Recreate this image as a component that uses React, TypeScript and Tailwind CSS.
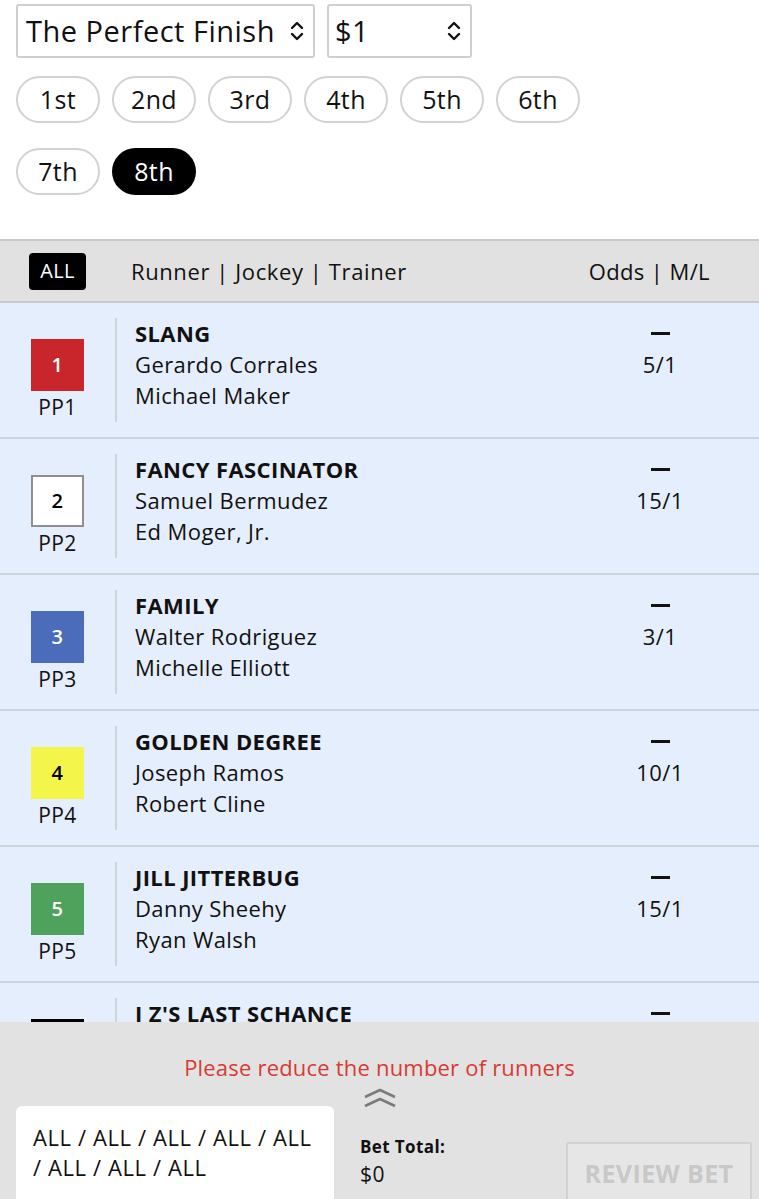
import React from 'react';

const MAIN = "font-['Open_Sans','Lato',sans-serif]";

type Runner = {
  pp: number;
  name: string;
  jockey: string;
  trainer: string;
  odds: string;
  box: string;
};

const runners: Runner[] = [
  { pp: 1, name: 'SLANG', jockey: 'Gerardo Corrales', trainer: 'Michael Maker', odds: '5/1', box: 'bg-[#c8262b] text-white' },
  { pp: 2, name: 'FANCY FASCINATOR', jockey: 'Samuel Bermudez', trainer: 'Ed Moger, Jr.', odds: '15/1', box: 'bg-white text-black border-2 border-[#8f8f8f]' },
  { pp: 3, name: 'FAMILY', jockey: 'Walter Rodriguez', trainer: 'Michelle Elliott', odds: '3/1', box: 'bg-[#4a6cba] text-white' },
  { pp: 4, name: 'GOLDEN DEGREE', jockey: 'Joseph Ramos', trainer: 'Robert Cline', odds: '10/1', box: 'bg-[#f4f54b] text-black' },
  { pp: 5, name: 'JILL JITTERBUG', jockey: 'Danny Sheehy', trainer: 'Ryan Walsh', odds: '15/1', box: 'bg-[#4fa25c] text-white' },
  { pp: 6, name: "J Z'S LAST SCHANCE", jockey: '', trainer: '', odds: '', box: 'bg-black text-white' },
];

const races = ['1st', '2nd', '3rd', '4th', '5th', '6th', '7th', '8th'];

const UpDown = () => (
  <svg width="14" height="22" viewBox="0 0 14 22" fill="none" stroke="#111" strokeWidth="2.4" strokeLinecap="round" strokeLinejoin="round">
    <path d="M2 8 L7 3 L12 8" />
    <path d="M2 14 L7 19 L12 14" />
  </svg>
);

const RunnerRow = ({ r }: { r: Runner }) => (
  <div className="flex h-[136px] border-b-2 border-[#cfd4dc] bg-[#e5eefc]">
    <div className="flex w-[115px] flex-col items-center pt-[36px]">
      <div className={`flex h-[52px] w-[53px] items-center justify-center text-[20px] font-semibold ${r.box}`}>
        {r.pp}
      </div>
      <div className="mt-[4px] text-[21px] leading-[24px] text-[#111]">PP{r.pp}</div>
    </div>
    <div className="my-[15px] w-[2px] bg-[#cfd3da]" />
    <div className="flex-1 pt-[15px] pl-[18px] text-[22px] leading-[31px] text-[#111]">
      <div className="font-bold">{r.name}</div>
      <div>{r.jockey}</div>
      <div>{r.trainer}</div>
    </div>
    <div className="mr-[19px] flex w-[160px] flex-col items-center pt-[15px] text-[22px] leading-[31px] text-[#111]">
      <div className="flex h-[31px] items-center">
        <div className="h-[2.5px] w-[19px] bg-[#111]" />
      </div>
      <div>{r.odds}</div>
    </div>
  </div>
);

export default function App() {
  return (
    <div className={`relative h-[1199px] w-[759px] overflow-hidden bg-white tracking-[0.4px] ${MAIN}`}>
      <div className="flex gap-[12px] pt-[4px] pl-[16px]">
        <div className="flex h-[54px] w-[299px] items-center justify-between rounded-[3px] border-2 border-[#cfcfcf] pr-[9px] pl-[8px] text-[29px] tracking-[0.5px] text-[#111]">
          <span>The Perfect Finish</span>
          <UpDown />
        </div>
        <div className="flex h-[54px] w-[145px] items-center justify-between rounded-[3px] border-2 border-[#cfcfcf] pr-[9px] pl-[6px] text-[29px] tracking-[0.5px] text-[#111]">
          <span>$1</span>
          <UpDown />
        </div>
      </div>

      <div className="mt-[18px] flex w-[600px] flex-wrap gap-x-[12px] gap-y-[25px] pl-[16px]">
        {races.map((r) => (
          <div
            key={r}
            className={`flex h-[47px] w-[84px] items-center justify-center rounded-full text-[25px] ${
              r === '8th' ? 'bg-black text-white' : 'border-2 border-[#d2d2d2] text-[#111]'
            }`}
          >
            {r}
          </div>
        ))}
      </div>

      <div className="mt-[44px] flex h-[64px] items-center border-t-2 border-b-2 border-[#c9c9c9] bg-[#e1e1e1] text-[22px] text-[#111]">
        <div className="ml-[29px] flex h-[37px] w-[57px] items-center justify-center rounded-[4px] bg-black text-[20px] text-white">
          ALL
        </div>
        <div className="ml-[45px] flex-1 tracking-[0.6px]">Runner | Jockey | Trainer</div>
        <div className="mr-[49px]">Odds | M/L</div>
      </div>

      {runners.map((r) => (
        <RunnerRow key={r.pp} r={r} />
      ))}

      <div className="absolute inset-x-0 bottom-0 h-[177px] bg-[#e2e2e2]">
        <div className="mt-[31px] text-center text-[22px] leading-[28px] tracking-[0.2px] text-[#d73a32]">
          Please reduce the number of runners
        </div>
        <div className="mt-[6px] flex justify-center">
          <svg width="34" height="22" viewBox="0 0 34 22" fill="none" stroke="#7a7a7a" strokeWidth="2.6" strokeLinejoin="round">
            <path d="M2 10 L17 3 L32 10" />
            <path d="M2 19 L17 12 L32 19" />
          </svg>
        </div>
        <div className="flex items-start">
          <div className="mt-[-3px] ml-[16px] h-[120px] w-[318px] rounded-t-[6px] bg-white px-[17px] pt-[16px] text-[22px] leading-[30px] tracking-[0.6px] text-[#111]">
            ALL / ALL / ALL / ALL / ALL
            <br />/ ALL / ALL / ALL
          </div>
          <div className="ml-[26px] pt-[25px] text-[#111]">
            <div className="text-[17px] leading-[26px] font-bold">Bet Total:</div>
            <div className="text-[21px] leading-[28px]">$0</div>
          </div>
          <div className="mt-[33px] ml-auto mr-[7px] flex h-[70px] w-[186px] items-start justify-center rounded-[2px] border-2 border-[#d2d2d2] bg-[#e6e6e6] pt-[11px] text-[25px] font-bold text-[#c8c8c8]">
            REVIEW BET
          </div>
        </div>
      </div>
    </div>
  );
}
